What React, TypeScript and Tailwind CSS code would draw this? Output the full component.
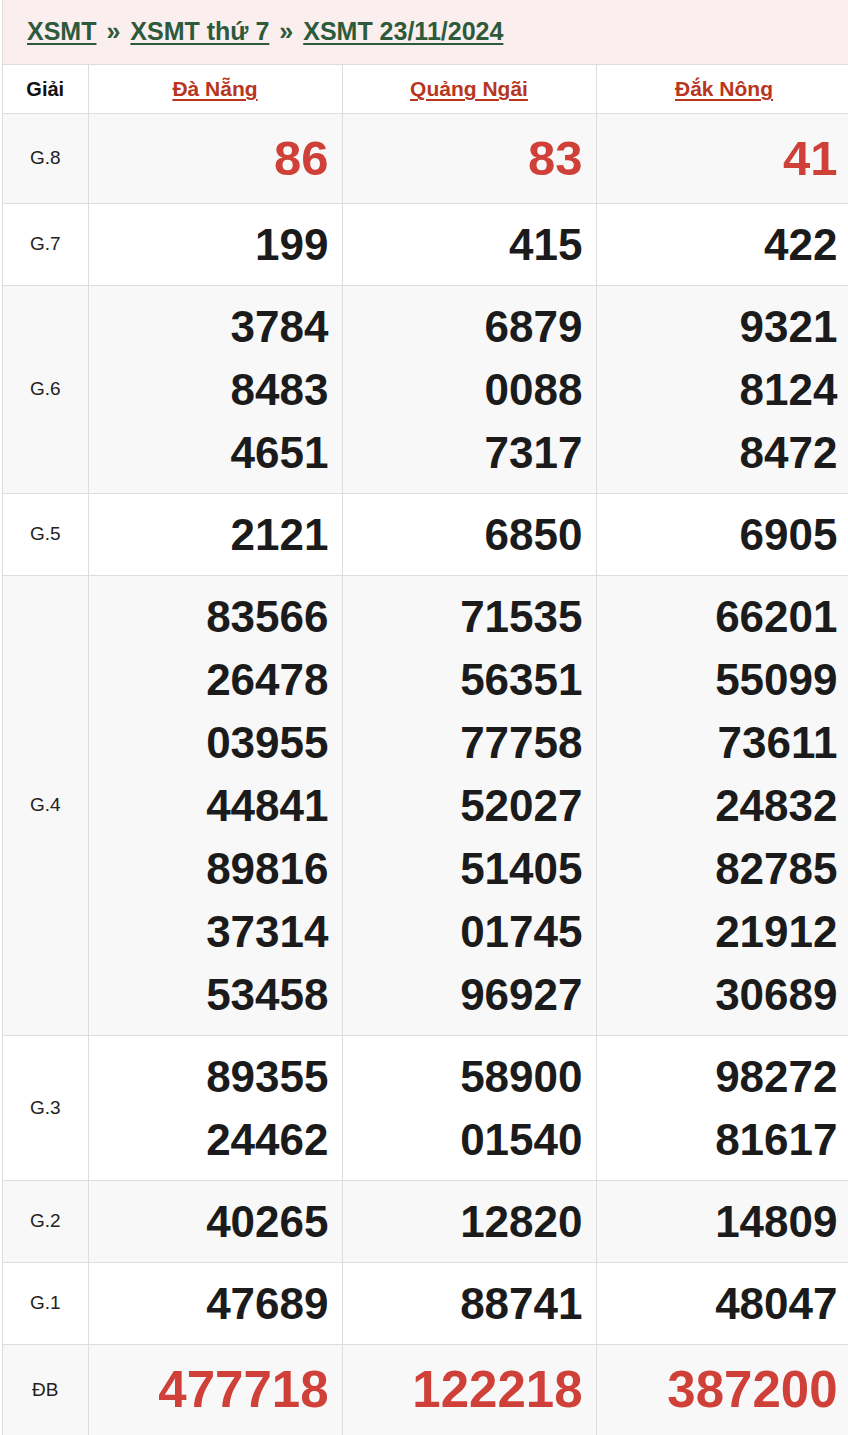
import React from "react"

type Row = { label: string; nums: string[][]; red?: boolean; size: string; lh: string }

const rows: Row[] = [
  { label: "G.8", nums: [["86"], ["83"], ["41"]], red: true, size: "text-[49px]", lh: "h-[71px] leading-[71px]" },
  { label: "G.7", nums: [["199"], ["415"], ["422"]], size: "text-[44px]", lh: "h-[63px] leading-[63px]" },
  {
    label: "G.6",
    nums: [
      ["3784", "8483", "4651"],
      ["6879", "0088", "7317"],
      ["9321", "8124", "8472"],
    ],
    size: "text-[44px]",
    lh: "h-[63px] leading-[63px]",
  },
  { label: "G.5", nums: [["2121"], ["6850"], ["6905"]], size: "text-[44px]", lh: "h-[63px] leading-[63px]" },
  {
    label: "G.4",
    nums: [
      ["83566", "26478", "03955", "44841", "89816", "37314", "53458"],
      ["71535", "56351", "77758", "52027", "51405", "01745", "96927"],
      ["66201", "55099", "73611", "24832", "82785", "21912", "30689"],
    ],
    size: "text-[44px]",
    lh: "h-[63px] leading-[63px]",
  },
  {
    label: "G.3",
    nums: [
      ["89355", "24462"],
      ["58900", "01540"],
      ["98272", "81617"],
    ],
    size: "text-[44px]",
    lh: "h-[63px] leading-[63px]",
  },
  { label: "G.2", nums: [["40265"], ["12820"], ["14809"]], size: "text-[44px]", lh: "h-[63px] leading-[63px]" },
  { label: "G.1", nums: [["47689"], ["88741"], ["48047"]], size: "text-[44px]", lh: "h-[63px] leading-[63px]" },
  { label: "ĐB", nums: [["477718"], ["122218"], ["387200"]], red: true, size: "text-[51px]", lh: "h-[72px] leading-[72px]" },
]

const provinces = ["Đà Nẵng", "Quảng Ngãi", "Đắk Nông"]

export default function App() {
  return (
    <div
      className="w-[848px] h-[1435px] overflow-hidden bg-white"
      style={{ fontFamily: '"Liberation Sans", Arial, sans-serif' }}
    >
      <div className="ml-[2px] w-[860px] border-l border-[#dddddd]">
        <div className="h-[64px] bg-[#fbeeee] flex items-center pl-[24px] text-[25px] font-bold text-[#2d5a3b] whitespace-nowrap">
          <a className="underline decoration-2 underline-offset-[3px]">XSMT</a>
          <span className="mx-[10px]">»</span>
          <a className="underline decoration-2 underline-offset-[3px]">XSMT thứ 7</a>
          <span className="mx-[10px]">»</span>
          <a className="underline decoration-2 underline-offset-[3px]">XSMT 23/11/2024</a>
        </div>
        <table className="border-collapse table-fixed w-[849px]">
          <colgroup>
            <col className="w-[85px]" />
            <col className="w-[254px]" />
            <col className="w-[254px]" />
            <col className="w-[256px]" />
          </colgroup>
          <thead>
            <tr className="h-[49px] bg-white">
              <th className="border border-l-0 border-[#dddddd] text-[20px] font-bold text-[#111]">Giải</th>
              {provinces.map((p) => (
                <th key={p} className="border border-[#dddddd] text-[21px] font-bold text-[#b8361e]">
                  <span className="underline decoration-2 underline-offset-[3px]">{p}</span>
                </th>
              ))}
            </tr>
          </thead>
          <tbody>
            {rows.map((r, i) => (
              <tr key={r.label} className={i % 2 === 0 ? "bg-[#f8f8f8]" : "bg-white"}>
                <td className="border border-l-0 border-[#dddddd] text-center text-[19px] text-[#222]">
                  {r.label}
                </td>
                {r.nums.map((col, j) => (
                  <td
                    key={j}
                    className={
                      "border border-[#dddddd] py-[9px] text-right font-bold " +
                      (j === 2 ? "pr-[14px] " : "pr-[13px] ") +
                      r.size +
                      (r.red ? " text-[#cf4038]" : " text-[#1b1b1b]")
                    }
                  >
                    {col.map((n) => (
                      <div key={n} className={r.lh}>
                        {n}
                      </div>
                    ))}
                  </td>
                ))}
              </tr>
            ))}
          </tbody>
        </table>
      </div>
    </div>
  )
}
